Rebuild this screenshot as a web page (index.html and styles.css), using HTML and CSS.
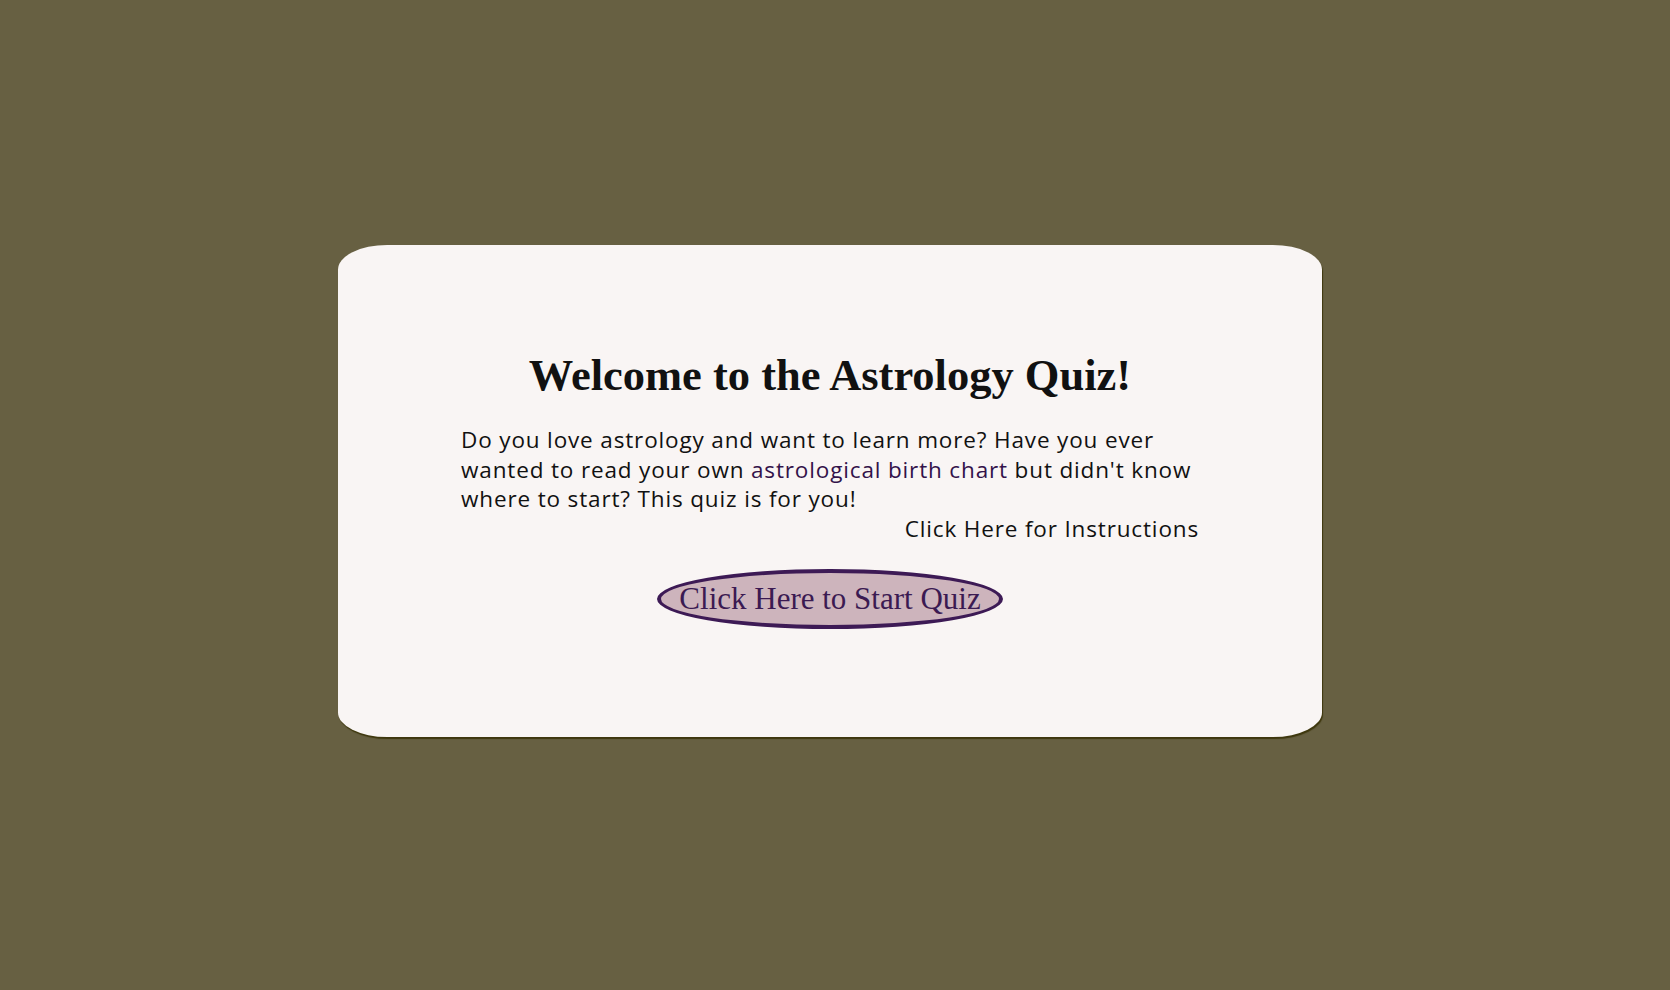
FILE: index.html
```html
<!DOCTYPE html>
<html lang="en">
<head>
<meta charset="utf-8">
<title>Astrology Quiz</title>
<link rel="stylesheet" href="styles.css">
</head>
<body>
<main class="card">
  <h1 class="title">Welcome to the Astrology Quiz!</h1>
  <div class="content">
    <p class="intro">Do you love astrology and want to learn more? Have you ever wanted to read your own <a class="link" href="#">astrological birth chart</a> but didn't know where to start? This quiz is for you!</p>
    <p class="instructions">Click Here for Instructions</p>
  </div>
  <button class="start">Click Here to Start Quiz</button>
</main>
</body>
</html>
```
FILE: styles.css
```css
html, body {
  margin: 0;
  padding: 0;
}
body {
  background: #676042;
  min-height: 100vh;
  box-sizing: border-box;
  display: flex;
  align-items: center;
  justify-content: center;
  padding: 0 10px 8px 0;
}
.card {
  width: 984px;
  height: 492px;
  box-sizing: border-box;
  background: #f9f5f4;
  border-radius: 5%;
  box-shadow: 1px 2px 1px rgba(55, 48, 5, 0.85);
  display: flex;
  flex-direction: column;
  align-items: center;
  padding-top: 104px;
}
.title {
  margin: 0;
  font-family: "Liberation Serif", serif;
  font-weight: bold;
  font-size: 44.5px;
  line-height: 52px;
  color: #111;
}
.content {
  width: 738px;
  margin-top: 24px;
  font-family: "Open Sans", Lato, sans-serif;
  font-size: 22.5px;
  letter-spacing: 0.85px;
  line-height: 29.5px;
  color: #111;
}
.intro {
  margin: 0;
}
.link {
  color: #33124a;
  text-decoration: none;
}
.instructions {
  margin: 0;
  text-align: right;
}
.start {
  margin-top: 26px;
  font-family: "Liberation Serif", serif;
  font-size: 31px;
  line-height: 36px;
  color: #3b1a52;
  background: #cdb4bc;
  border: 4px solid #3d1a55;
  border-radius: 50%;
  padding: 8px 18px;
  cursor: pointer;
}
```
